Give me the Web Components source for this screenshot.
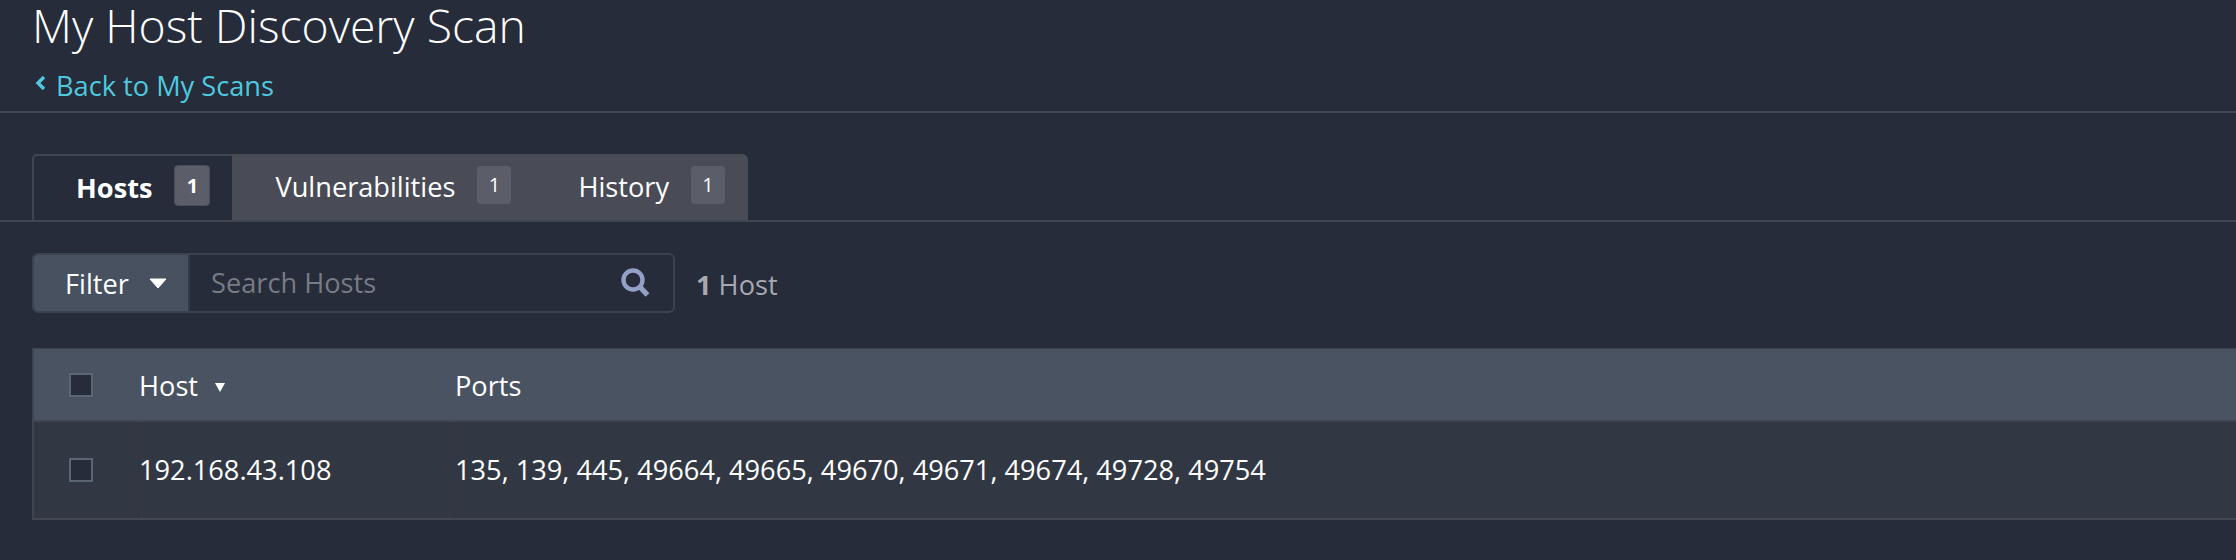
<!DOCTYPE html>
<html>
<head>
<meta charset="utf-8">
<title>My Host Discovery Scan</title>
<style>
    html, body { margin: 0; padding: 0; height: 100%; background: #262c3a; overflow: hidden; }
    body { font-family: "Open Sans", sans-serif; color: #fff; }
</style>
</head>
<body>
<scan-header heading="My Host Discovery Scan" back="Back to My Scans"></scan-header>
<scan-tabs>
    <scan-tab active count="1">Hosts</scan-tab>
    <scan-tab count="1">Vulnerabilities</scan-tab>
    <scan-tab count="1" last>History</scan-tab>
</scan-tabs>
<scan-toolbar placeholder="Search Hosts"></scan-toolbar>
<scan-table>
    <scan-row head host="Host" ports="Ports"></scan-row>
    <scan-row host="192.168.43.108" ports="135, 139, 445, 49664, 49665, 49670, 49671, 49674, 49728, 49754"></scan-row>
</scan-table>

<script>
// Page title and back link
class ScanHeader extends HTMLElement {
    constructor() {
        super();
        const root = this.attachShadow({mode: 'open'});
        root.innerHTML = `
            <style>
                :host { display: block; height: 111px; padding-left: 32px; border-bottom: 2px solid #3f4652; }
                h1 { margin: 0; font-size: 46.3px; font-weight: 300; line-height: 52px; color: #fff; }
                a { display: flex; align-items: center; gap: 10px; margin: 18px 0 0 3px; font-size: 27.2px; line-height: 30px; color: #4fc8df; }
                svg { width: 11px; height: 16px; margin-top: -5px; }
                span { margin-top: 1px; }
            </style>
            <h1></h1>
            <a><svg viewBox="0 0 11 16"><path d="M9 2L3 8l6 6" fill="none" stroke="#4fc8df" stroke-width="3.4"/></svg><span></span></a>
        `;
        root.querySelector('h1').textContent = this.getAttribute('heading');
        root.querySelector('span').textContent = this.getAttribute('back');
    }
}

class ScanTabs extends HTMLElement {
    constructor() {
        super();
        const root = this.attachShadow({mode: 'open'});
        root.innerHTML = `
            <style>
                :host { display: flex; height: 66px; margin-top: 41px; padding-left: 32px; border-bottom: 2px solid #3f4652; }
            </style>
            <slot></slot>
        `;
    }
}

class ScanTab extends HTMLElement {
    constructor() {
        super();
        const root = this.attachShadow({mode: 'open'});
        root.innerHTML = `
            <style>
                :host { display: flex; align-items: center; height: 66px; padding: 0 22px 0 43px; font-size: 27.2px; background: #494c57; color: #fff; box-sizing: border-box; border-radius: 0; }
                :host([active]) { background: #262c3a; font-weight: 700; padding: 0 22px 0 42px; border: 2px solid #3f4652; border-bottom: 0; border-right: 0; border-radius: 5px 0 0 0; }
                :host([last]) { border-radius: 0 6px 0 0; padding: 0 23px 0 67px; margin-left: -22px; }
                .label { margin-top: -2px; }
                .count { margin-left: 22px; width: 34px; height: 38px; margin-top: -5px; border-radius: 4px; background: #5b5e69; font-size: 20px; font-weight: 400; display: flex; align-items: center; justify-content: center; box-sizing: border-box; }
                :host([active]) .count { font-weight: 700; width: 36px; height: 41px; border: 1px solid #4a4e5a; }
            </style>
            <span class="label"><slot></slot></span>
            <span class="count"></span>
        `;
        root.querySelector('.count').textContent = this.getAttribute('count');
    }
}

class ScanToolbar extends HTMLElement {
    constructor() {
        super();
        const root = this.attachShadow({mode: 'open'});
        root.innerHTML = `
            <style>
                :host { display: flex; align-items: center; margin: 31px 0 0 32px; height: 60px; }
                .box { display: flex; width: 643px; height: 60px; border: 2px solid #3b4250; border-radius: 6px; box-sizing: border-box; overflow: hidden; }
                .filter { display: flex; align-items: center; width: 156px; height: 100%; padding-left: 31px; gap: 20px; box-sizing: border-box; background: #475160; font-size: 27.2px; color: #fff; border-right: 2px solid #333a48; }
                .filter svg { margin-top: 1px; }
                .search { flex: 1; display: flex; align-items: center; justify-content: space-between; padding: 0 22px 0 21px; font-size: 27.2px; color: #777b84; }
                #ph { margin-top: -2px; }
                .count { margin-left: 21px; margin-top: 3px; font-size: 27.2px; color: #a6a9af; }
                b { font-weight: 700; }
            </style>
            <div class="box">
                <div class="filter">
                    <span>Filter</span>
                    <svg width="18" height="11" viewBox="0 0 18 11"><path d="M1 1h16L9 10z" fill="#fff" stroke="#fff" stroke-linejoin="round"/></svg>
                </div>
                <div class="search">
                    <span id="ph"></span>
                    <svg width="30" height="30" viewBox="0 0 30 30"><circle cx="12" cy="12" r="9.5" fill="none" stroke="#93a1c4" stroke-width="4.4"/><path d="M18.5 18.5L26.5 27" stroke="#93a1c4" stroke-width="5.4"/></svg>
                </div>
            </div>
            <span class="count"><b>1</b> Host</span>
        `;
        root.querySelector('#ph').textContent = this.getAttribute('placeholder');
    }
}

class ScanTable extends HTMLElement {
    constructor() {
        super();
        const root = this.attachShadow({mode: 'open'});
        root.innerHTML = `
            <style>
                :host { display: block; margin: 35px 0 0 32px; border-left: 2px solid #3e4450; }
            </style>
            <slot></slot>
        `;
    }
}

class ScanRow extends HTMLElement {
    constructor() {
        super();
        const root = this.attachShadow({mode: 'open'});
        root.innerHTML = `
            <style>
                :host { display: grid; grid-template-columns: 104px 316px 1fr; align-items: stretch; height: 98px; background: #323843; border-bottom: 2px solid #434853; font-size: 27.2px; color: #fff; box-sizing: border-box; }
                :host([head]) { height: 74px; background: #4a5362; border-top: 1px solid #3e4450; border-bottom: 2px solid #3f4551; }
                .cell { display: flex; align-items: center; }
                .check { padding-left: 35px; }
                .box { width: 24px; height: 24px; background: #262c3a; border: 2px solid #5b6675; box-sizing: border-box; }
                .host { gap: 17px; border-left: 1px solid #303540; margin-bottom: -1px; }
                .ports { border-left: 1px solid #303540; margin-bottom: -1px; }
                :host([head]) .host, :host([head]) .ports { border-left-color: #4a5362; }
                .host span, .ports span { margin-top: -2px; }
                :host([head]) .host span, :host([head]) .ports span { margin-top: 0; }
                .arrow { display: none; }
                :host([head]) .arrow { display: block; margin-top: 3px; }
            </style>
            <div class="cell check"><div class="box"></div></div>
            <div class="cell host"><span id="h"></span><svg class="arrow" width="10" height="10" viewBox="0 0 10 10"><path d="M0 1h10L5 10z" fill="#fff"/></svg></div>
            <div class="cell ports"><span id="p"></span></div>
        `;
        root.querySelector('#h').textContent = this.getAttribute('host');
        root.querySelector('#p').textContent = this.getAttribute('ports');
    }
}

customElements.define('scan-header', ScanHeader);
customElements.define('scan-tabs', ScanTabs);
customElements.define('scan-tab', ScanTab);
customElements.define('scan-toolbar', ScanToolbar);
customElements.define('scan-table', ScanTable);
customElements.define('scan-row', ScanRow);
</script>
</body>
</html>
